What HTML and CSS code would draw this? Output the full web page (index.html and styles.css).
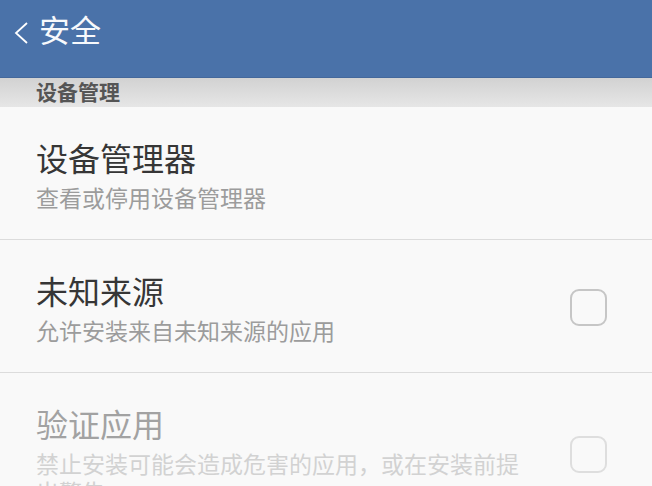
FILE: index.html
```html
<!DOCTYPE html>
<html lang="zh-CN">
<head>
  <meta charset="UTF-8">
  <meta name="viewport" content="width=device-width, initial-scale=1.0">
  <title>安全</title>
  <link rel="stylesheet" href="styles.css">
</head>
<body>
  <header class="topbar">
    <svg class="back" width="14" height="22" viewBox="0 0 14 22">
      <polyline points="13,1 2,11 13,21" fill="none" stroke="#ffffff" stroke-width="1.8"/>
    </svg>
    <h1>安全</h1>
  </header>

  <div class="section-title">设备管理</div>

  <ul class="list">
    <li class="item">
      <div class="text">
        <div class="title">设备管理器</div>
        <div class="desc">查看或停用设备管理器</div>
      </div>
    </li>
    <li class="item">
      <div class="text">
        <div class="title">未知来源</div>
        <div class="desc">允许安装来自未知来源的应用</div>
      </div>
      <span class="check"></span>
    </li>
    <li class="item disabled">
      <div class="text">
        <div class="title">验证应用</div>
        <div class="desc">禁止安装可能会造成危害的应用，或在安装前提出警告</div>
      </div>
      <span class="check"></span>
    </li>
  </ul>
</body>
</html>
```

FILE: styles.css
```css
* {
  margin: 0;
  padding: 0;
  box-sizing: border-box;
}

body {
  font-family: "Noto Sans CJK SC", "Noto Sans", sans-serif;
  background: #f9f9f9;
  overflow: hidden;
}

.topbar {
  height: 78px;
  display: flex;
  align-items: center;
  gap: 11px;
  padding: 0 0 20px 14px;
  background: #4a72a9;
  border-bottom: 1px solid #44689b;
}

.back {
  margin-top: 8px;
}

.topbar h1 {
  font-size: 31px;
  font-weight: 400;
  line-height: 1;
  color: #f7f9fc;
}

.section-title {
  height: 29px;
  padding-left: 36px;
  font-size: 21px;
  font-weight: 700;
  line-height: 27px;
  color: #555;
  background: linear-gradient(#d2d2d2, #e6e6e6);
}

.list {
  list-style: none;
}

.item {
  display: flex;
  align-items: center;
  gap: 36px;
  padding: 30px 45px 28px 36px;
  border-bottom: 1px solid #dcdcdc;
}

.text {
  flex: 1;
}

.title {
  font-size: 32px;
  line-height: 40px;
  color: #363636;
}

.desc {
  margin-top: 6px;
  font-size: 23px;
  line-height: 28px;
  color: #9c9c9c;
}

.check {
  width: 37px;
  height: 37px;
  flex-shrink: 0;
  border: 2px solid #c6c6c6;
  border-radius: 9px;
}

.disabled .title {
  color: #a2a2a2;
}

.disabled .desc {
  color: #d2d2d2;
}

.disabled .check {
  border-color: #dedede;
}
```
